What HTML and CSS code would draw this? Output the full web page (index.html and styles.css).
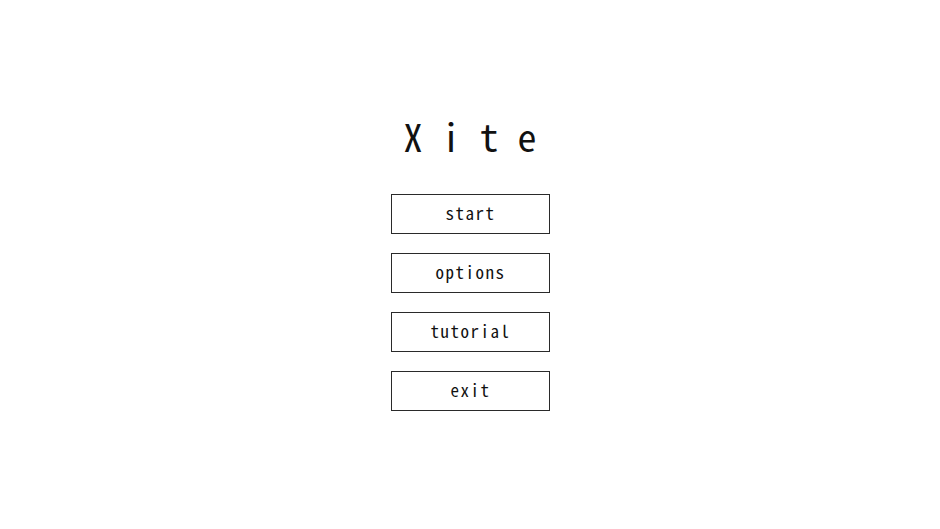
FILE: index.html
```html
<!DOCTYPE html>
<html lang="ja">
<head>
<meta charset="utf-8">
<title>Xite</title>
<link rel="stylesheet" href="styles.css">
</head>
<body>
<main class="menu">
  <h1 class="title">Xite</h1>
  <nav class="buttons">
    <button class="btn">start</button>
    <button class="btn">options</button>
    <button class="btn">tutorial</button>
    <button class="btn">exit</button>
  </nav>
</main>
</body>
</html>
```
FILE: styles.css
```css
html, body {
  margin: 0;
  padding: 0;
  background: #ffffff;
}
body {
  width: 940px;
  height: 529px;
  font-family: "Noto Sans Mono CJK JP", "DejaVu Sans Mono", "Liberation Mono", monospace;
  color: #111;
}
.menu {
  box-sizing: border-box;
  height: 100%;
  padding-top: 112px;
  display: flex;
  flex-direction: column;
  align-items: center;
}
.title {
  margin: 0 0 34px 0;
  font-size: 38px;
  font-weight: 400;
  line-height: 48px;
  letter-spacing: 19px;
  padding-left: 19px;
}
.buttons {
  display: flex;
  flex-direction: column;
  gap: 19px;
}
.btn {
  box-sizing: border-box;
  width: 159px;
  height: 40px;
  border: 1px solid #2a2a2a;
  background: #fff;
  font-family: inherit;
  font-size: 17px;
  font-weight: 400;
  letter-spacing: 1.5px;
  color: #111;
  padding: 0 0 3px 1px;
}
```
